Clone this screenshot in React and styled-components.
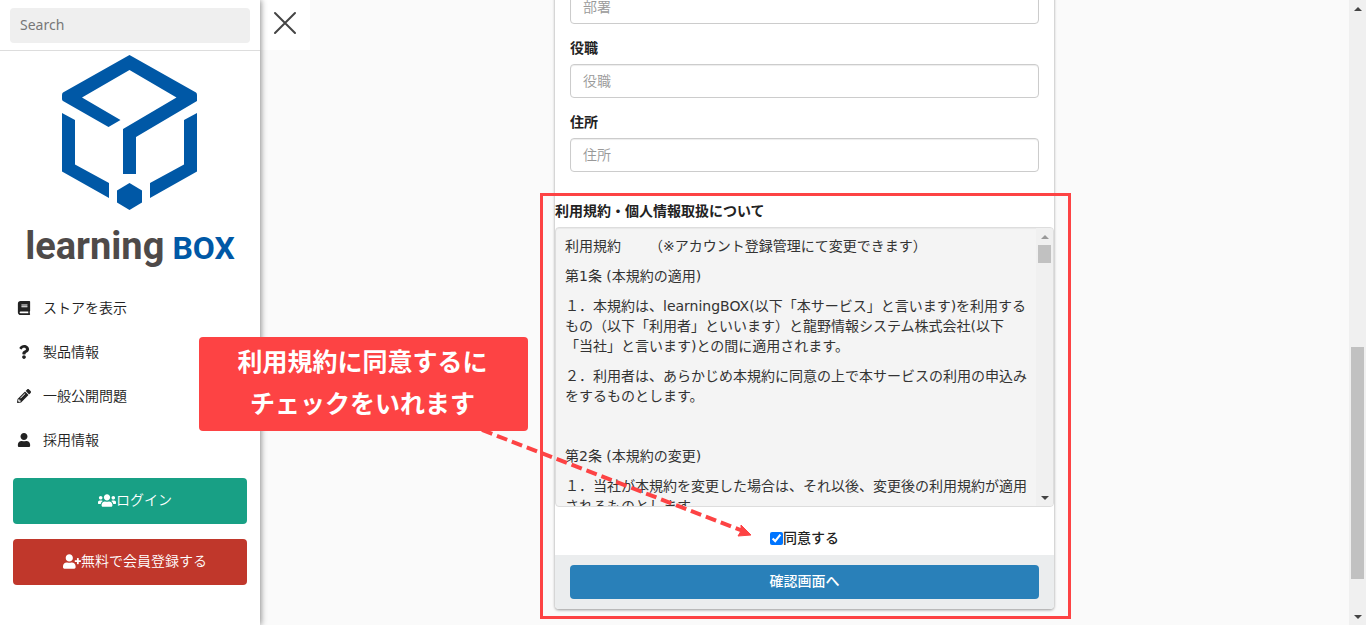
import React, { useId } from "react";
import styled, { createGlobalStyle } from "styled-components";
import { FaBook, FaQuestion, FaPencilAlt, FaUser, FaUsers, FaUserPlus } from "react-icons/fa";

const Global = createGlobalStyle`
  *, *::before, *::after { box-sizing: border-box; }
  body {
    margin: 0;
    background: #fafafa;
    color: #222;
    font-family: "Noto Sans", "Noto Sans CJK JP", sans-serif;
    font-size: 14px;
    font-weight: 350;
    line-height: 20px;
    text-spacing-trim: space-all;
  }
  button, input { font: inherit; }
`;

const Page = styled.div`
  display: flex;
  height: 100vh;
  overflow: hidden;
`;

const Sidebar = styled.aside`
  position: relative;
  z-index: 1;
  flex: 0 0 260px;
  background: #fff;
  box-shadow: 1px 0 6px rgba(0, 0, 0, 0.45);
`;

const SearchBar = styled.div`
  padding: 8px 10px 7px;
  border-bottom: 1px solid #ddd;
`;

const SearchInput = styled.input`
  display: block;
  width: 100%;
  height: 35px;
  padding: 0 10px 2px;
  border: 0;
  border-radius: 4px;
  background: #efefef;
  font-weight: 400;
  &::placeholder { color: #777; opacity: 1; }
`;

const Brand = styled.a`
  display: flex;
  flex-direction: column;
  align-items: center;
  padding-top: 4px;
  color: #4e4a49;
  text-decoration: none;
`;

const BrandMark = styled.svg`
  width: 136px;
  height: 156px;
`;

const BrandName = styled.span`
  display: flex;
  align-items: baseline;
  gap: 8px;
  margin-top: 8px;
  font: bold 38px/54px Roboto, "Liberation Sans", sans-serif;
`;

const BrandBox = styled.span`
  color: #0058a6;
  font-size: 32px;
`;

const Menu = styled.nav`
  display: flex;
  flex-direction: column;
  margin-top: 11px;
`;

const MenuLink = styled.a`
  display: flex;
  align-items: center;
  gap: 12px;
  height: 44px;
  padding-left: 17px;
  color: #222;
  text-decoration: none;
`;

const Actions = styled.div`
  display: flex;
  flex-direction: column;
  gap: 15px;
  padding: 16px 13px;
`;

const ActionButton = styled.button`
  display: flex;
  align-items: center;
  justify-content: center;
  height: 46px;
  padding: 0 0 2px 10px;
  border: 0;
  border-radius: 4px;
  background: ${(p) => p.$color};
  color: #fff;
  svg { width: 18px; height: 15px; }
`;

const Main = styled.main`
  display: flex;
  flex: 1;
  align-items: flex-start;
  min-width: 0;
`;

const CloseButton = styled.button`
  display: grid;
  place-items: center;
  flex: 0 0 50px;
  height: 50px;
  margin-right: -50px;
  padding: 0 0 4px;
  border: 0;
  background: #fff;
`;

const Card = styled.form`
  position: relative;
  width: 100%;
  max-width: 499px;
  margin: -10px auto 0;
  border-radius: 4px;
  background: #fff;
  box-shadow: 0 1px 3px rgba(0, 0, 0, 0.4);
`;

const Fields = styled.div`
  display: flex;
  flex-direction: column;
  gap: 15px;
  padding: 0 15px 15px;
`;

const Field = styled.div`
  display: flex;
  flex-direction: column;
`;

const Label = styled.label`
  padding-bottom: 6px;
  margin-top: -1px;
  font-weight: 700;
`;

const TextInput = styled.input`
  width: 100%;
  height: 34px;
  padding: 0 12px 2px;
  border: 1px solid #ccc;
  border-radius: 4px;
  background: #fff;
  box-shadow: inset 0 1px 1px rgba(0, 0, 0, 0.075);
  &::placeholder { color: #999; opacity: 1; }
`;

const Agreement = styled.section`
  position: relative;
  padding-top: 14px;
`;

const AgreementTitle = styled.h2`
  margin: 0 0 6px;
  font-size: 14px;
  font-weight: 700;
  line-height: 20px;
`;

const TermsBox = styled.div`
  display: flex;
  height: 280px;
  overflow: hidden;
  border: 1px solid #ddd;
  border-radius: 4px;
  background: #f4f4f4;
  box-shadow: inset 0 1px 1px rgba(0, 0, 0, 0.05);
`;

const TermsText = styled.div`
  flex: 1;
  padding: 8px 7px 0 9px;
  color: #333;
  font-family: "DejaVu Sans", "Noto Sans CJK JP", sans-serif;
  font-weight: 400;
  p { min-height: 20px; margin: 0 0 10px; }
`;

const Track = styled.div`
  display: flex;
  flex: 0 0 17px;
  flex-direction: column;
  align-items: center;
  justify-content: space-between;
  padding: 7px 0 6px;
  background: #f0f0f0;
`;

const Arrow = styled.svg`
  width: 8px;
  height: 4px;
  fill: ${(p) => p.$fill || "#444"};
`;

const Rail = styled.div`
  display: flex;
  flex: 1;
  flex-direction: column;
  width: 13px;
  padding: 6px 0;
`;

const Thumb = styled.div`
  flex: 0 0 ${(p) => p.$size};
  background: #c1c1c1;
`;

const Spacer = styled.div`
  flex: ${(p) => p.$grow} 0 0;
`;

const AgreeRow = styled.label`
  display: flex;
  align-items: center;
  justify-content: center;
  height: 48px;
  padding-top: 14px;
  font-weight: 500;
`;

const CheckBox = styled.input`
  width: 13px;
  height: 13px;
  margin: 0;
  accent-color: #0075ff;
`;

const Footer = styled.div`
  padding: 10px 15px;
  border-radius: 0 0 4px 4px;
  background: #ebedee;
`;

const SubmitButton = styled.button`
  display: block;
  width: 100%;
  height: 34px;
  padding: 0 0 2px;
  border: 0;
  border-radius: 4px;
  background: #2980b9;
  color: #fff;
  font-weight: 500;
`;

const Highlight = styled.div`
  position: absolute;
  inset: 6px -17px -10px -15px;
  border: 3px solid #fd4344;
  pointer-events: none;
`;

const Pointer = styled.svg`
  position: absolute;
  z-index: 2;
  top: 243px;
  left: -80px;
  width: 280px;
  height: 112px;
  pointer-events: none;
`;

const Callout = styled.p`
  position: absolute;
  z-index: 3;
  top: 150px;
  left: -356px;
  width: 329px;
  margin: 0;
  padding: 3px 2px 7px 0;
  border-radius: 4px;
  background: #fd4344;
  color: #fff;
  font-size: 25px;
  font-weight: 700;
  line-height: 42px;
  text-align: center;
`;

const menu = [
  { icon: FaBook, text: "ストアを表示" },
  { icon: FaQuestion, text: "製品情報" },
  { icon: FaPencilAlt, text: "一般公開問題" },
  { icon: FaUser, text: "採用情報" },
];

const terms = [
  "利用規約　　（※アカウント登録管理にて変更できます）",
  "第1条 (本規約の適用)",
  "１．本規約は、learningBOX(以下「本サービス」と言います)を利用するもの（以下「利用者」といいます）と龍野情報システム株式会社(以下「当社」と言います)との間に適用されます。",
  "２．利用者は、あらかじめ本規約に同意の上で本サービスの利用の申込みをするものとします。",
  "",
  "第2条 (本規約の変更)",
  "１．当社が本規約を変更した場合は、それ以後、変更後の利用規約が適用されるものとします。",
];

function TextField({ label, hideLabel }) {
  const id = useId();
  return (
    <Field>
      {!hideLabel && <Label htmlFor={id}>{label}</Label>}
      <TextInput id={id} placeholder={label} aria-label={hideLabel ? label : undefined} />
    </Field>
  );
}

function ScrollTrack({ before, size, after, upFill }) {
  return (
    <Track aria-hidden="true">
      <Arrow viewBox="0 0 8 4" $fill={upFill}><path d="M0 4 4 0l4 4z" /></Arrow>
      <Rail>
        <Spacer $grow={before} />
        <Thumb $size={size} />
        <Spacer $grow={after} />
      </Rail>
      <Arrow viewBox="0 0 8 4"><path d="M0 0 4 4l4-4z" /></Arrow>
    </Track>
  );
}

export default function App() {
  return (
    <>
      <Global />
      <Page lang="ja">
        <Sidebar>
          <SearchBar>
            <SearchInput type="search" placeholder="Search" aria-label="Search" />
          </SearchBar>
          <Brand href="#">
            <BrandMark viewBox="0 0 136 156" fill="#0058a6" aria-hidden="true">
              <path d="M67.500 0 134 37.500Q135 38 135 40V46L74 82V119H61V74L114.500 42.500 67.500 15 20 42.500 58.500 65 46.500 72 1 46Q0 45.500 0 44V40Q0 38 1 37.500Z" />
              <path d="M0 58 13 65V109.500L47 128V143L0 116.500Z" />
              <path d="M135 58 122 65V109.500L88 128V143L135 116.500Z" />
              <path d="M67.500 128 80 135.500V147.500L67.500 155 55 147.500V135.500Z" />
            </BrandMark>
            <BrandName>learning<BrandBox>BOX</BrandBox></BrandName>
          </Brand>
          <Menu>
            {menu.map(({ icon: Icon, text }) => (
              <MenuLink href="#" key={text}><Icon size={14} />{text}</MenuLink>
            ))}
          </Menu>
          <Actions>
            <ActionButton type="button" $color="#18a085"><FaUsers />ログイン</ActionButton>
            <ActionButton type="button" $color="#c0372b"><FaUserPlus />無料で会員登録する</ActionButton>
          </Actions>
        </Sidebar>
        <Main>
          <CloseButton type="button" aria-label="閉じる">
            <svg width="24" height="24" viewBox="0 0 24 24" stroke="#444" strokeWidth="2" strokeLinecap="round">
              <path d="M2 2 22 22M22 2 2 22" />
            </svg>
          </CloseButton>
          <Card onSubmit={(e) => e.preventDefault()}>
            <Fields>
              <TextField label="部署" hideLabel />
              <TextField label="役職" />
              <TextField label="住所" />
            </Fields>
            <Agreement>
              <AgreementTitle>利用規約・個人情報取扱について</AgreementTitle>
              <TermsBox>
                <TermsText>
                  {terms.map((t, i) => <p key={i}>{t}</p>)}
                </TermsText>
                <ScrollTrack before={0} size="18px" after={1} upFill="#999" />
              </TermsBox>
              <AgreeRow>
                <CheckBox type="checkbox" defaultChecked />
                同意する
              </AgreeRow>
              <Footer>
                <SubmitButton type="submit">確認画面へ</SubmitButton>
              </Footer>
              <Highlight />
              <Pointer viewBox="0 0 280 112" aria-hidden="true">
                <path d="M7 0 268 101" stroke="#fd4344" strokeWidth="4" strokeDasharray="11 5" fill="none" />
                <path d="M276 105 263 106 266 101 266 95Z" fill="#fd4344" stroke="#fd4344" />
              </Pointer>
              <Callout>利用規約に同意するに<br />チェックをいれます</Callout>
            </Agreement>
          </Card>
        </Main>
        <ScrollTrack before={330} size="232px" after={30} />
      </Page>
    </>
  );
}
